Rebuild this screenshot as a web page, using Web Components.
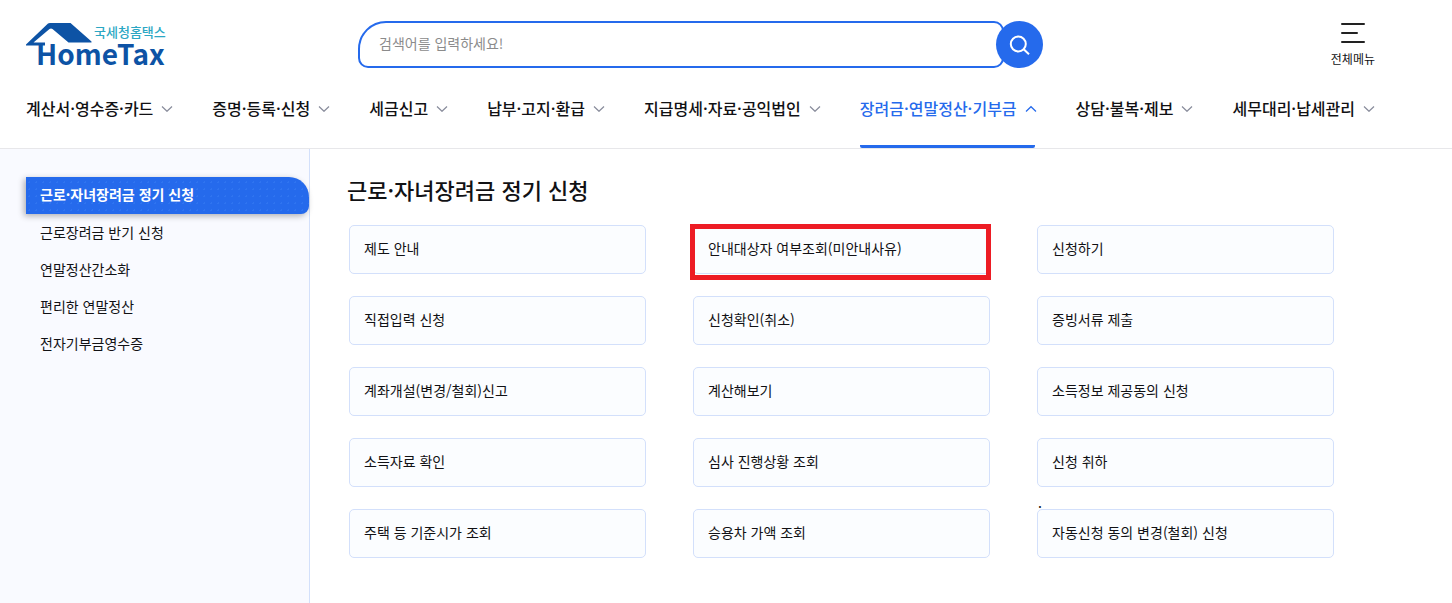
<!DOCTYPE html>
<html lang="ko">
<head>
<meta charset="utf-8">
<meta name="viewport" content="width=device-width, initial-scale=1">
<title>HomeTax</title>
<style>
  :root {
    --blue: #256aec;
    --ink: #111114;
    --line: #e7e7ea;
    --card-line: #d3e0fb;
  }

  body {
    margin: 0;
    background: #fff;
    color: var(--ink);
    font-family: "Noto Sans CJK KR", "Noto Sans", sans-serif;
    font-size: 14px;
  }
</style>
</head>
<body>
<tax-page>
  <tax-header slot="header">
    <tax-logo slot="logo"></tax-logo>
    <search-box placeholder="검색어를 입력하세요!"></search-box>
    <all-menu slot="menu">전체메뉴</all-menu>
  </tax-header>

  <main-nav slot="header">
    <nav-item>계산서·영수증·카드</nav-item>
    <nav-item>증명·등록·신청</nav-item>
    <nav-item>세금신고</nav-item>
    <nav-item>납부·고지·환급</nav-item>
    <nav-item>지급명세·자료·공익법인</nav-item>
    <nav-item active>장려금·연말정산·기부금</nav-item>
    <nav-item>상담·불복·제보</nav-item>
    <nav-item>세무대리·납세관리</nav-item>
  </main-nav>

  <side-menu slot="side">
    <side-item active>근로·자녀장려금 정기 신청</side-item>
    <side-item>근로장려금 반기 신청</side-item>
    <side-item>연말정산간소화</side-item>
    <side-item>편리한 연말정산</side-item>
    <side-item>전자기부금영수증</side-item>
  </side-menu>

  <card-section>
    <span slot="title">근로·자녀장려금 정기 신청</span>
    <menu-card>제도 안내</menu-card>
    <menu-card marked>안내대상자 여부조회(미안내사유)</menu-card>
    <menu-card>신청하기</menu-card>
    <menu-card>직접입력 신청</menu-card>
    <menu-card>신청확인(취소)</menu-card>
    <menu-card>증빙서류 제출</menu-card>
    <menu-card>계좌개설(변경/철회)신고</menu-card>
    <menu-card>계산해보기</menu-card>
    <menu-card>소득정보 제공동의 신청</menu-card>
    <menu-card>소득자료 확인</menu-card>
    <menu-card>심사 진행상황 조회</menu-card>
    <menu-card>신청 취하</menu-card>
    <menu-card>주택 등 기준시가 조회</menu-card>
    <menu-card>승용차 가액 조회</menu-card>
    <menu-card><span slot="note">.</span>자동신청 동의 변경(철회) 신청</menu-card>
  </card-section>
</tax-page>

<script>
  // Registers an element whose shadow root is filled from a markup string
  function define(name, markup, setup) {
    const template = document.createElement("template");
    template.innerHTML = markup;

    customElements.define(
      name,
      class extends HTMLElement {
        constructor() {
          super();
          this.attachShadow({ mode: "open" }).append(template.content.cloneNode(true));
        }

        connectedCallback() {
          setup?.(this, this.shadowRoot);
        }
      }
    );
  }

  define("tax-page", /*html*/ `
    <style>
      :host {
        display: flex;
        flex-direction: column;
        min-height: 100vh;
      }

      header {
        border-bottom: 1px solid var(--line);
      }

      .body {
        display: flex;
        flex: 1;
      }

      main {
        flex: 1;
        min-width: 0;
      }
    </style>
    <header><slot name="header"></slot></header>
    <div class="body">
      <slot name="side"></slot>
      <main><slot></slot></main>
    </div>
  `);

  define("tax-header", /*html*/ `
    <style>
      :host {
        display: grid;
        grid-template-columns: 1fr minmax(0, 685px) 1fr;
        align-items: start;
        padding: 21px 77px 0 26px;
      }

      .menu {
        justify-self: end;
      }
    </style>
    <slot name="logo"></slot>
    <slot></slot>
    <div class="menu"><slot name="menu"></slot></div>
  `);

  define("tax-logo", /*html*/ `
    <style>
      :host,
      a,
      svg {
        display: block;
      }

      a {
        width: 142px;
      }

      svg {
        overflow: visible;
      }
    </style>
    <a href="#" aria-label="HomeTax">
      <svg width="142" height="47" viewBox="0 0 142 47">
        <path fill="#0d53a5" d="M0 23.500L22 2.600Q22.700 2 24 2H44.500L65.500 20.500V21.500H42.500L26.500 8Q25 6.800 23.500 8L7.500 21.500H19V24.500H0Z"/>
        <text x="68" y="16" font-size="13" font-weight="500" fill="#2ba7c4">국세청홈택스</text>
        <text x="10" y="44" font-size="28" font-weight="700" fill="#0d53a5">HomeTax</text>
      </svg>
    </a>
  `);

  define("search-box", /*html*/ `
    <style>
      :host {
        display: block;
      }

      form {
        display: flex;
        align-items: center;
        margin: 0;
      }

      input {
        flex: 1;
        min-width: 0;
        height: 47px;
        box-sizing: border-box;
        margin-right: -8px;
        padding: 0 20px 4px 19px;
        border: 2px solid var(--blue);
        border-radius: 28px 10px 10px 10px;
        background: #fff;
        color: inherit;
        font: inherit;
        outline: none;
      }

      input::placeholder {
        color: #8b8b8b;
        opacity: 1;
      }

      button {
        display: grid;
        place-content: center;
        position: relative;
        width: 47px;
        height: 47px;
        padding: 0;
        border: 0;
        border-radius: 50%;
        background: var(--blue);
        cursor: pointer;
      }
    </style>
    <form>
      <input type="search" aria-label="검색어">
      <button type="button" aria-label="검색">
        <svg width="22" height="22" viewBox="0 0 22 22" fill="none" stroke="#fff" stroke-width="2">
          <circle cx="9.300" cy="10" r="7.500"/>
          <path d="M14.700 15.300L20 20.300"/>
        </svg>
      </button>
    </form>
  `, (host, root) => {
    root.querySelector("input").placeholder = host.getAttribute("placeholder") ?? "";
  });

  define("all-menu", /*html*/ `
    <style>
      :host {
        display: block;
      }

      button {
        display: grid;
        justify-items: center;
        gap: 6px;
        padding: 2px 0 0;
        border: 0;
        background: none;
        color: inherit;
        font: inherit;
        font-size: 12px;
        line-height: 18px;
        cursor: pointer;
      }
    </style>
    <button type="button">
      <svg width="24" height="21" viewBox="0 0 24 21" fill="none" stroke="#222" stroke-width="2" stroke-linecap="round">
        <path d="M1 1H23M1 10H16M1 19H23"/>
      </svg>
      <slot></slot>
    </button>
  `);

  define("main-nav", /*html*/ `
    <style>
      :host {
        display: block;
      }

      nav {
        display: flex;
        gap: 41px;
        padding: 0 26px;
      }
    </style>
    <nav><slot></slot></nav>
  `);

  define("nav-item", /*html*/ `
    <style>
      :host {
        display: block;
        border-bottom: 3px solid transparent;
        border-radius: 2px;
      }

      :host([active]) {
        border-color: var(--blue);
        color: var(--blue);
      }

      a {
        display: flex;
        align-items: center;
        gap: 8px;
        margin-right: -2px;
        padding: 28px 0 25px;
        color: inherit;
        font-size: 16px;
        font-weight: 500;
        line-height: 24px;
        text-decoration: none;
        white-space: nowrap;
      }

      svg {
        stroke: #888c9b;
      }

      :host([active]) svg {
        stroke: var(--blue);
      }

      :host([active]) path {
        transform: rotate(180deg);
        transform-origin: 6px 5px;
      }
    </style>
    <a href="#">
      <slot></slot>
      <svg width="12" height="8" viewBox="0 0 12 8" fill="none" stroke-width="1.200">
        <path d="M1 2.500L6 7.300L11 2.500"/>
      </svg>
    </a>
  `);

  define("side-menu", /*html*/ `
    <style>
      :host {
        display: block;
        flex: none;
        box-sizing: border-box;
        width: 310px;
        padding: 28px 0 0 26px;
        border-right: 1px solid #d3e0fb;
        background: #f9faff;
      }

      nav {
        display: grid;
      }
    </style>
    <nav><slot></slot></nav>
  `);

  define("side-item", /*html*/ `
    <style>
      :host {
        display: block;
      }

      a {
        display: block;
        padding: 5px 14px 8px;
        color: inherit;
        line-height: 24px;
        text-decoration: none;
      }

      :host([active]) {
        margin-bottom: 1px;
      }

      :host([active]) a {
        border-radius: 0 20px 8px 0;
        background: radial-gradient(circle, #2f74f0 1px, transparent 1px) 0 2px / 7px 7px var(--blue);
        box-shadow: -2px 2px 6px rgb(0 0 0 / .3);
        color: #fff;
        font-weight: 700;
      }
    </style>
    <a href="#"><slot></slot></a>
  `);

  define("card-section", /*html*/ `
    <style>
      :host {
        display: block;
        padding: 22px 118px 24px 39px;
      }

      h2 {
        margin: 0 0 18px -2px;
        font-size: 22px;
        font-weight: 500;
        line-height: 36px;
      }

      .grid {
        display: grid;
        grid-template-columns: repeat(3, minmax(0, 1fr));
        gap: 22px 47px;
      }
    </style>
    <h2><slot name="title"></slot></h2>
    <div class="grid"><slot></slot></div>
  `);

  define("menu-card", /*html*/ `
    <style>
      :host {
        display: block;
        position: relative;
      }

      a {
        display: block;
        padding: 10px 14px 13px;
        border: 1px solid var(--card-line);
        border-radius: 5px;
        background: #fbfdff;
        color: inherit;
        line-height: 24px;
        text-decoration: none;
      }

      /* Red frame laid over the card */
      :host([marked])::after {
        content: "";
        position: absolute;
        inset: -1px -1px -6px -3px;
        border: 5px solid #ed1c24;
        pointer-events: none;
      }

      slot[name="note"]::slotted(*) {
        position: absolute;
        bottom: 100%;
        left: 1px;
        line-height: 14px;
      }
    </style>
    <slot name="note"></slot>
    <a href="#"><slot></slot></a>
  `);
</script>
</body>
</html>
